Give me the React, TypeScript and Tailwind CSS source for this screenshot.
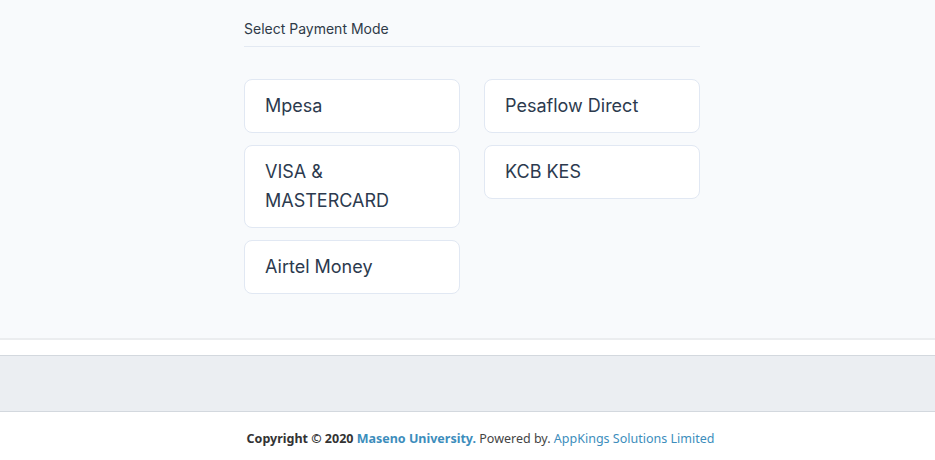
import React from 'react';

const modes: string[][] = [
    ['Mpesa', 'VISA & MASTERCARD', 'Airtel Money'],
    ['Pesaflow Direct', 'KCB KES'],
];

const ModeCard: React.FC<{ label: string }> = ({ label }) => (
    <button className="w-full text-left bg-white border border-[#e1e8f3] rounded-[8px] pl-[20px] pr-4 pt-[11px] pb-[12px] text-[18px] leading-[29px] text-[#2c3a4e] hover:border-[#b9c8e0] transition-colors">
        {label === 'VISA & MASTERCARD' ? (
            <>
                VISA &amp;
                <br />
                MASTERCARD
            </>
        ) : (
            label
        )}
    </button>
);

const App: React.FC = () => {
    return (
        <div className="w-[935px] h-[460px] overflow-hidden bg-white flex flex-col">
            {/* Payment panel */}
            <div className="bg-[#f8fafc] h-[338px] flex justify-center" style={{ fontFamily: 'Inter, "Noto Sans", sans-serif' }}>
                <div className="w-[456px] ml-[9px] pt-[19px]">
                    <div className="text-[14px] leading-[20px] text-[#2f3a48] pb-[7px] border-b border-[#e3e9f2]">
                        Select Payment Mode
                    </div>
                    <div className="grid grid-cols-2 gap-x-[24px] mt-[32px]">
                        {modes.map((col, i) => (
                            <div key={i} className="flex flex-col gap-[12px]">
                                {col.map(m => (
                                    <ModeCard key={m} label={m} />
                                ))}
                            </div>
                        ))}
                    </div>
                </div>
            </div>

            <div className="h-[2px] bg-[#ebedef]" />
            <div className="h-[15px] bg-white" />

            {/* Gray band */}
            <div className="h-[57px] bg-[#ebeef2] border-y border-[#d3d8de]" />

            {/* Footer */}
            <footer
                className="flex-1 flex justify-center pt-[18px] pl-[26px] text-[12.5px] leading-[18px] text-[#444]"
                style={{ fontFamily: '"Source Sans Pro", "Noto Sans", sans-serif' }}
            >
                <p>
                    <strong className="font-bold text-[#333]">Copyright © 2020 </strong>
                    <a href="#" className="font-bold text-[#3c8dbc]">Maseno University.</a>{' '}
                    Powered by. <a href="#" className="text-[#3c8dbc]">AppKings Solutions Limited</a>
                </p>
            </footer>
        </div>
    );
};

export default App;
